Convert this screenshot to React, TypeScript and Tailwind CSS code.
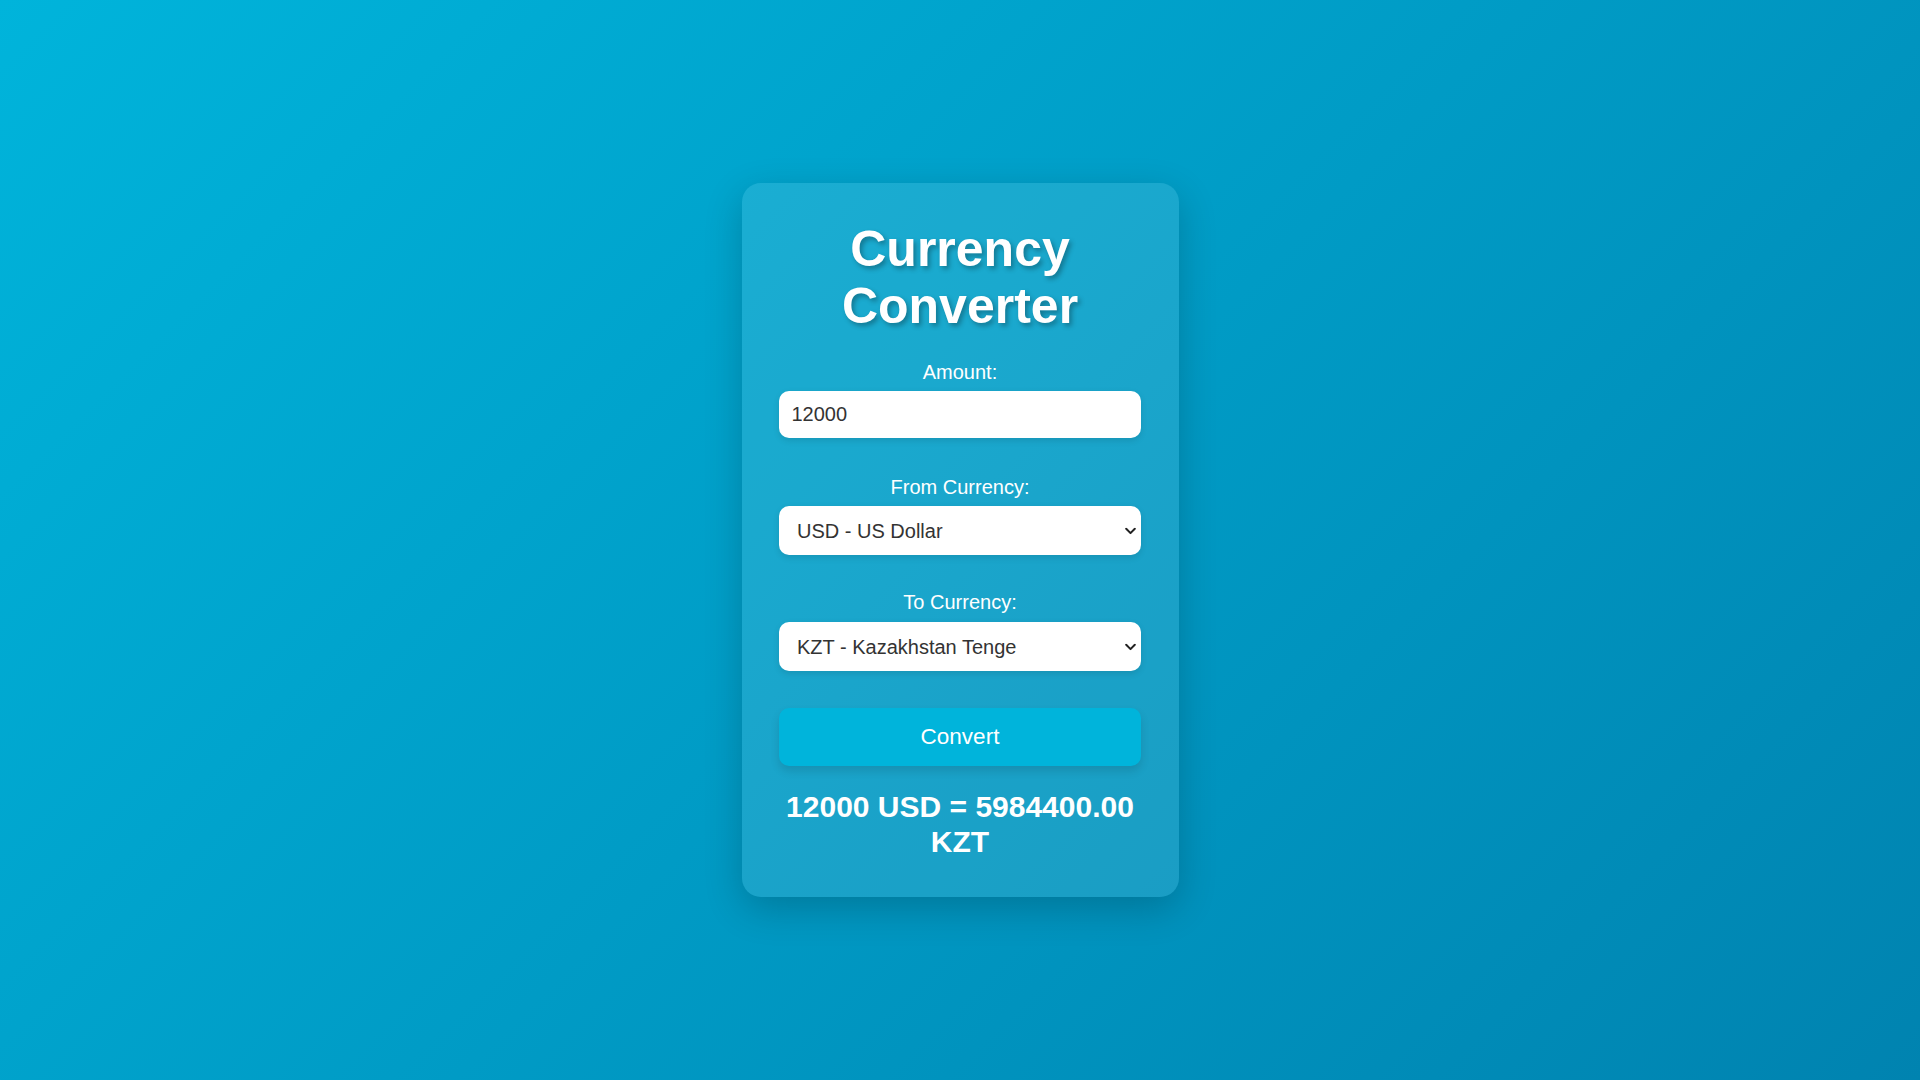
import React, { useState } from "react";

function Chevron() {
  return (
    <svg
      className="pointer-events-none absolute right-[4px] top-1/2 -translate-y-1/2"
      width="11"
      height="7"
      viewBox="0 0 11 7"
      fill="none"
      stroke="#222"
      strokeWidth="2"
      strokeLinecap="round"
      strokeLinejoin="round"
      style={{ right: "5px" }}
    >
      <path d="M1.2 1.2 L5.5 5.6 L9.8 1.2" />
    </svg>
  );
}

export default function App() {
  const [amount, setAmount] = useState("12000");
  const [from, setFrom] = useState("USD");
  const [to, setTo] = useState("KZT");

  const selectCls =
    "block w-full h-[49px] appearance-none rounded-[10px] bg-white pl-[18px] pr-[24px] text-[20px] text-[#333] outline-none shadow-[0_2.5px_6px_rgba(0,0,0,0.1)]";

  return (
    <div
      className="min-h-screen w-full flex items-center justify-center bg-[linear-gradient(135deg,#00b4db,#0083b0)]"
      style={{ fontFamily: '"Liberation Sans", Arial, sans-serif' }}
    >
      <div className="w-[437px] rounded-[19px] bg-white/10 px-[37.5px] pt-[38px] pb-[38px] shadow-[0_12px_38px_rgba(0,0,0,0.2)]">
        <h2 className="text-center text-[50px] leading-[57.5px] font-bold text-white mb-[25px] [text-shadow:2.5px_2.5px_5px_rgba(0,0,0,0.3)]">
          Currency Converter
        </h2>

        <label className="block text-center text-[20px] leading-[23px] text-white mb-[7.5px]">
          Amount:
        </label>
        <input
          value={amount}
          onChange={(e) => setAmount(e.target.value)}
          className="block w-full h-[47px] rounded-[10px] bg-white px-[12.5px] text-[20px] text-[#333] outline-none shadow-[0_2.5px_6px_rgba(0,0,0,0.1)] mb-[38px]"
          style={{ fontFamily: '"Liberation Sans", Arial, sans-serif' }}
        />

        <label className="block text-center text-[20px] leading-[23px] text-white mb-[7px]">
          From Currency:
        </label>
        <div className="relative mb-[36px]">
          <select
            value={from}
            onChange={(e) => setFrom(e.target.value)}
            className={selectCls}
            style={{ fontFamily: '"Liberation Sans", Arial, sans-serif' }}
          >
            <option value="USD">USD - US Dollar</option>
            <option value="EUR">EUR - Euro</option>
            <option value="KZT">KZT - Kazakhstan Tenge</option>
          </select>
          <Chevron />
        </div>

        <label className="block text-center text-[20px] leading-[23px] text-white mb-[8px]">
          To Currency:
        </label>
        <div className="relative mb-[37px]">
          <select
            value={to}
            onChange={(e) => setTo(e.target.value)}
            className={selectCls}
            style={{ fontFamily: '"Liberation Sans", Arial, sans-serif' }}
          >
            <option value="USD">USD - US Dollar</option>
            <option value="EUR">EUR - Euro</option>
            <option value="KZT">KZT - Kazakhstan Tenge</option>
          </select>
          <Chevron />
        </div>

        <button
          className="block w-full h-[58px] rounded-[10px] bg-[#00b4db] text-white text-[22.5px] shadow-[0_5px_10px_rgba(0,0,0,0.12)] mb-[24px]"
          style={{ fontFamily: '"Liberation Sans", Arial, sans-serif' }}
        >
          Convert
        </button>

        <div className="text-center text-[30px] leading-[34.5px] font-bold text-white">
          12000 USD = 5984400.00 KZT
        </div>
      </div>
    </div>
  );
}
